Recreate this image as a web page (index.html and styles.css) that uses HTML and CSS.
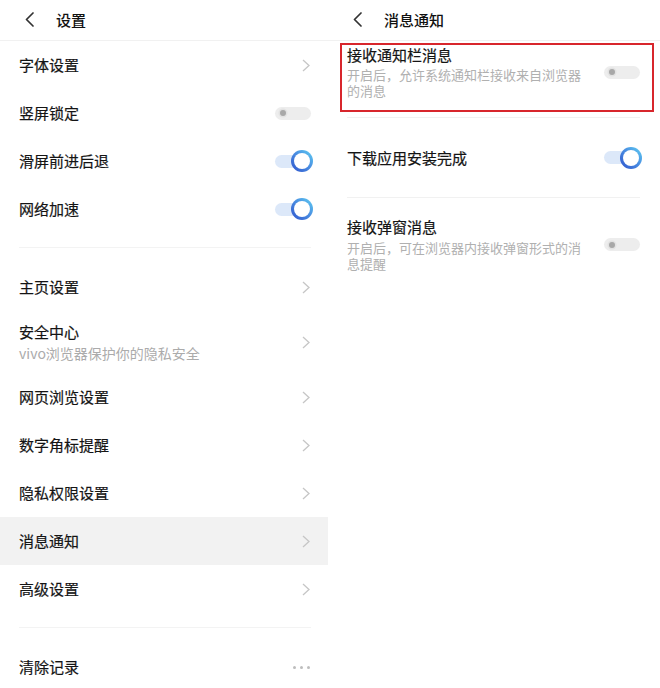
FILE: index.html
```html
<!DOCTYPE html>
<html lang="zh-CN">
<head>
<meta charset="utf-8">
<title>设置</title>
<link rel="stylesheet" href="styles.css">
</head>
<body>
<div class="screen">
  <section class="panel left">
    <header class="bar">
      <svg class="back" width="9" height="15" viewBox="0 0 9 15"><polyline points="8,1 1.5,7.5 8,14" fill="none" stroke="#333" stroke-width="1.7" stroke-linecap="round" stroke-linejoin="round"/></svg>
      <h1 class="title">设置</h1>
    </header>

    <div class="row"><span class="label">字体设置</span><svg class="chev" width="8" height="13" viewBox="0 0 8 13"><polyline points="1,1 7,6.5 1,12" fill="none" stroke="#c6c6c6" stroke-width="1.3"/></svg></div>
    <div class="row"><span class="label">竖屏锁定</span><span class="switch off"><span class="track"></span><span class="dot"></span></span></div>
    <div class="row"><span class="label">滑屏前进后退</span><span class="switch on"><span class="track"></span><span class="knob"></span></span></div>
    <div class="row"><span class="label">网络加速</span><span class="switch on"><span class="track"></span><span class="knob"></span></span></div>

    <div class="divider"></div>

    <div class="row"><span class="label">主页设置</span><svg class="chev" width="8" height="13" viewBox="0 0 8 13"><polyline points="1,1 7,6.5 1,12" fill="none" stroke="#c6c6c6" stroke-width="1.3"/></svg></div>
    <div class="row tall">
      <div class="text"><div class="label">安全中心</div><div class="sub">vivo浏览器保护你的隐私安全</div></div>
      <svg class="chev" width="8" height="13" viewBox="0 0 8 13"><polyline points="1,1 7,6.5 1,12" fill="none" stroke="#c6c6c6" stroke-width="1.3"/></svg>
    </div>
    <div class="row"><span class="label">网页浏览设置</span><svg class="chev" width="8" height="13" viewBox="0 0 8 13"><polyline points="1,1 7,6.5 1,12" fill="none" stroke="#c6c6c6" stroke-width="1.3"/></svg></div>
    <div class="row"><span class="label">数字角标提醒</span><svg class="chev" width="8" height="13" viewBox="0 0 8 13"><polyline points="1,1 7,6.5 1,12" fill="none" stroke="#c6c6c6" stroke-width="1.3"/></svg></div>
    <div class="row"><span class="label">隐私权限设置</span><svg class="chev" width="8" height="13" viewBox="0 0 8 13"><polyline points="1,1 7,6.5 1,12" fill="none" stroke="#c6c6c6" stroke-width="1.3"/></svg></div>
    <div class="row active"><span class="label">消息通知</span><svg class="chev" width="8" height="13" viewBox="0 0 8 13"><polyline points="1,1 7,6.5 1,12" fill="none" stroke="#c6c6c6" stroke-width="1.3"/></svg></div>
    <div class="row"><span class="label">高级设置</span><svg class="chev" width="8" height="13" viewBox="0 0 8 13"><polyline points="1,1 7,6.5 1,12" fill="none" stroke="#c6c6c6" stroke-width="1.3"/></svg></div>

    <div class="divider"></div>

    <div class="row"><span class="label">清除记录</span><span class="dots"><i></i><i></i><i></i></span></div>
  </section>

  <section class="panel right">
    <header class="bar">
      <svg class="back" width="9" height="15" viewBox="0 0 9 15"><polyline points="8,1 1.5,7.5 8,14" fill="none" stroke="#333" stroke-width="1.7" stroke-linecap="round" stroke-linejoin="round"/></svg>
      <h1 class="title">消息通知</h1>
    </header>

    <div class="notice highlight">
      <div class="text">
        <div class="label">接收通知栏消息</div>
        <div class="desc">开启后，允许系统通知栏接收来自浏览器的消息</div>
      </div>
      <span class="switch off"><span class="track"></span><span class="dot"></span></span>
    </div>

    <div class="rdivider first"></div>

    <div class="notice plain">
      <span class="label">下载应用安装完成</span>
      <span class="switch on"><span class="track"></span><span class="knob"></span></span>
    </div>

    <div class="rdivider"></div>

    <div class="notice double">
      <div class="text">
        <div class="label">接收弹窗消息</div>
        <div class="desc">开启后，可在浏览器内接收弹窗形式的消息提醒</div>
      </div>
      <span class="switch off"><span class="track"></span><span class="dot"></span></span>
    </div>
  </section>
</div>
</body>
</html>
```

FILE: styles.css
```css
* { box-sizing: border-box; }

html, body {
  margin: 0;
  padding: 0;
  background: #fff;
}

body {
  font-family: "Noto Sans CJK SC", "Noto Sans", sans-serif;
  color: #1a1a1a;
}

.screen {
  display: flex;
  width: 660px;
  height: 688px;
  overflow: hidden;
  background: #fff;
}

.panel {
  display: flex;
  flex-direction: column;
}

.left { width: 328px; flex: 0 0 328px; }
.right { flex: 1; }

.bar {
  height: 41px;
  flex: 0 0 41px;
  display: flex;
  align-items: center;
  padding-left: 25px;
  padding-bottom: 1px;
  border-bottom: 1px solid #f1f1f1;
}

.back { margin-right: 22px; flex: none; }

.title {
  margin: 0;
  font-size: 15px;
  font-weight: 500;
  line-height: 20px;
  color: #111;
}

.row {
  height: 48px;
  flex: 0 0 48px;
  display: flex;
  align-items: center;
  justify-content: space-between;
  padding: 0 17px 0 19px;
}

.row.tall { height: 62px; flex-basis: 62px; }
.row.active { background: #f2f2f2; }

.label {
  font-size: 15px;
  line-height: 20px;
  color: #141414;
  -webkit-text-stroke: 0.2px #141414;
}

.sub {
  font-size: 14px;
  line-height: 20px;
  color: #ababab;
  margin-top: 1px;
}

.chev { flex: none; margin-right: 1px; }

.divider {
  height: 1px;
  flex: 0 0 1px;
  background: #f3f3f3;
  margin: 14px 17px 15px 19px;
}

.dots {
  display: flex;
  gap: 4px;
  margin-right: 1px;
}
.dots i {
  width: 3px;
  height: 3px;
  border-radius: 50%;
  background: #bdbdbd;
}

/* switches */
.switch {
  position: relative;
  width: 36px;
  height: 22px;
  flex: none;
  display: flex;
  align-items: center;
}

.switch .track {
  width: 36px;
  height: 13px;
  border-radius: 7px;
  background: #ededed;
}

.switch .dot {
  position: absolute;
  left: 5px;
  top: 8px;
  width: 6px;
  height: 6px;
  border-radius: 50%;
  background: #a8a8a8;
  box-shadow: 0 0 0 1.5px #e2e2e2;
}

.switch.on .track { background: #dce8f9; }

.switch .knob {
  position: absolute;
  right: -2px;
  top: 0;
  width: 22px;
  height: 22px;
  border-radius: 50%;
  border: 3px solid transparent;
  background:
    linear-gradient(#fff, #fff) padding-box,
    linear-gradient(to bottom left, #5fd0f3 0%, #4a8fe2 45%, #2e52cc 100%) border-box;
}

/* right panel */
.notice {
  display: flex;
  align-items: center;
  justify-content: space-between;
}

.notice.highlight {
  margin: 2px 6px 0 12px;
  border: 2px solid #d8262c;
  padding: 0 12px 11px 5px;
}

.notice.plain {
  height: 79px;
  flex: 0 0 79px;
  padding: 0 20px 0 19px;
}

.notice.double {
  padding: 19px 20px 0 19px;
}

.text { display: flex; flex-direction: column; }

.desc {
  width: 240px;
  font-size: 13px;
  line-height: 16px;
  color: #b0b0b0;
  margin-top: 2px;
}

.notice.double .desc { margin-top: 3px; }

.rdivider {
  height: 1px;
  flex: 0 0 1px;
  background: #f1f1f1;
  margin: 0 20px 0 19px;
}

.rdivider.first { margin-top: 5px; }
```
